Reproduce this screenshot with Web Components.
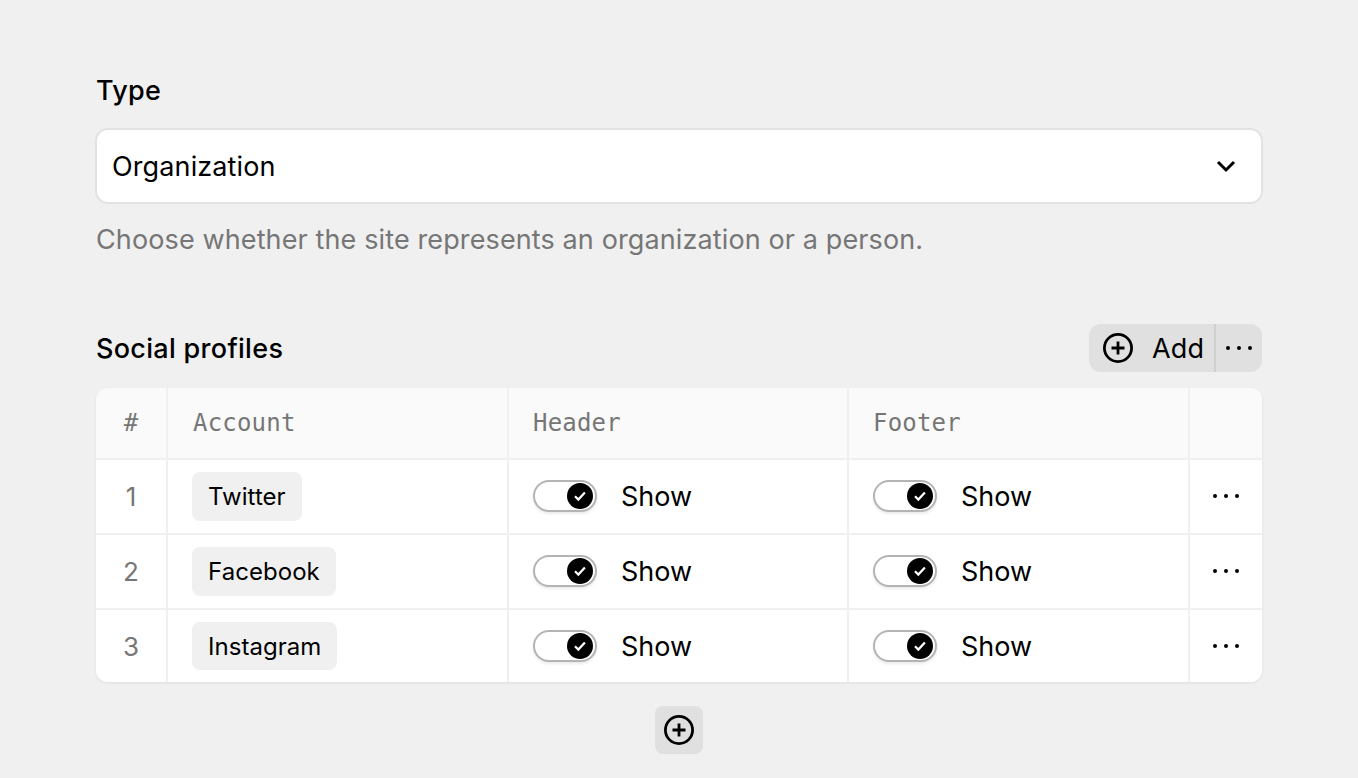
<!DOCTYPE html>
<html lang="en">
<head>
<meta charset="utf-8">
<title>Site settings</title>
<style>
  html, body { margin: 0; height: 100%; }
  body {
    background: #f0f0f0;
    color: #000;
    font-family: Inter, "Noto Sans", sans-serif;
    font-size: 27px;
    letter-spacing: 0.12px;
    overflow: hidden;
  }
  settings-page { height: 778px; }
</style>
</head>
<body>
<template id="plus-icon">
  <style>:host { display: inline-flex; width: 32px; height: 32px; } svg { display: block; }</style>
  <svg width="32" height="32" viewBox="0 0 32 32" fill="none" stroke="#000" stroke-width="2.8">
    <circle cx="16" cy="16" r="13.6"/>
    <path d="M16 9.5v13M9.5 16h13"/>
  </svg>
</template>

<template id="dots-icon">
  <style>:host { display: inline-flex; width: 28px; height: 6px; } svg { display: block; }</style>
  <svg width="28" height="6" viewBox="0 0 28 6" fill="#000">
    <circle cx="3" cy="3" r="2"/>
    <circle cx="14" cy="3" r="2"/>
    <circle cx="25" cy="3" r="2"/>
  </svg>
</template>

<settings-page>
  <field-label>Type</field-label>
  <select-box>Organization</select-box>
  <help-text>Choose whether the site represents an organization or a person.</help-text>
  <section-head>Social profiles</section-head>
  <profile-table>
    <profile-row num="1" account="Twitter"></profile-row>
    <profile-row num="2" account="Facebook"></profile-row>
    <profile-row num="3" account="Instagram"></profile-row>
  </profile-table>
  <add-row></add-row>
</settings-page>

<script>
  // small helper, every element below just sets its shadow html
  class Base extends HTMLElement {
    constructor() {
      super();
      this.attachShadow({ mode: "open" });
    }
    connectedCallback() {
      this.shadowRoot.innerHTML = this.render();
    }
  }

  class PlusIcon extends HTMLElement {
    constructor() {
      super();
      this.attachShadow({ mode: "open" });
      this.shadowRoot.append(document.getElementById("plus-icon").content.cloneNode(true));
    }
  }

  class DotsIcon extends HTMLElement {
    constructor() {
      super();
      this.attachShadow({ mode: "open" });
      this.shadowRoot.append(document.getElementById("dots-icon").content.cloneNode(true));
    }
  }

  class SettingsPage extends Base {
    render() {
      return `
        <style>
          :host { display: flex; flex-direction: column; padding: 73px 96px 0; box-sizing: border-box; }
        </style>
        <slot></slot>
      `;
    }
  }

  class FieldLabel extends Base {
    render() {
      return `
        <style>
          :host { display: block; height: 36px; line-height: 36px; font-weight: 500; letter-spacing: 0.3px; margin-bottom: 19px; }
        </style>
        <slot></slot>
      `;
    }
  }

  class SelectBox extends Base {
    render() {
      return `
        <style>
          :host {
            display: flex; align-items: center; justify-content: space-between;
            height: 76px; box-sizing: border-box;
            margin: 0 -1px 18px;
            padding: 0 25px 0 15px;
            background: #fff;
            border: 2px solid #e2e2e2;
            border-radius: 13px;
          }
          svg { display: block; }
        </style>
        <span><slot></slot></span>
        <svg width="20" height="14" viewBox="0 0 20 14" fill="none" stroke="#000" stroke-width="3">
          <path d="M2 3l8 8 8-8"/>
        </svg>
      `;
    }
  }

  class HelpText extends Base {
    render() {
      return `
        <style>
          :host { display: block; height: 36px; line-height: 36px; color: #767676; margin-bottom: 66px; }
        </style>
        <slot></slot>
      `;
    }
  }

  class SectionHead extends Base {
    render() {
      return `
        <style>
          :host { display: flex; align-items: center; justify-content: space-between; height: 48px; margin-bottom: 16px; }
          .title { font-weight: 500; letter-spacing: 0.3px; }
          .split { display: flex; height: 48px; background: #e0e0e0; border-radius: 12px; overflow: hidden; }
          .add { display: flex; align-items: center; gap: 18px; width: 127px; box-sizing: border-box; padding-left: 13px; border-right: 2px solid #cfcfcf; }
          .more { display: flex; align-items: center; justify-content: center; width: 46px; }
        </style>
        <span class="title"><slot></slot></span>
        <div class="split">
          <div class="add"><plus-icon></plus-icon><span>Add</span></div>
          <div class="more"><dots-icon></dots-icon></div>
        </div>
      `;
    }
  }

  class ProfileTable extends Base {
    render() {
      return `
        <style>
          :host {
            display: block;
            background: #fff;
            border-radius: 12px;
            overflow: hidden;
            box-shadow: 0 1px 3px rgba(0, 0, 0, 0.08);
          }
          .head {
            display: grid;
            grid-template-columns: 70px 339px 338px 339px 1fr;
            column-gap: 2px;
            height: 70px;
            background: #fafafa;
            border-bottom: 2px solid #f0f0f0;
            font-family: "DejaVu Sans Mono", "Liberation Mono", monospace;
            font-size: 24px;
            letter-spacing: 0.2px;
            color: #767676;
          }
          .head div { display: flex; align-items: center; position: relative; padding-left: 24px; }
          .head div:first-child { padding-left: 0; justify-content: center; }
          .head div:nth-child(2) { padding-left: 25px; }
          .head div:nth-child(n+2)::before {
            content: ""; position: absolute; left: -2px; top: 0; bottom: 0; width: 2px; background: #f0f0f0;
          }
        </style>
        <div class="head">
          <div>#</div><div>Account</div><div>Header</div><div>Footer</div><div></div>
        </div>
        <slot></slot>
      `;
    }
  }

  class ProfileRow extends Base {
    render() {
      const num = this.getAttribute("num");
      const account = this.getAttribute("account");
      return `
        <style>
          :host {
            display: grid;
            grid-template-columns: 70px 339px 338px 339px 1fr;
            column-gap: 2px;
            height: 73px;
            background: #f0f0f0;
            --nudge: 1px;
          }
          :host(:not(:last-child)) { border-bottom: 2px solid #f0f0f0; }
          :host(:last-child) { height: 72px; --nudge: 0px; }
          .cell { display: flex; align-items: center; background: #fff; }
          .num { justify-content: center; color: #767676; font-size: 26px; letter-spacing: 0; }
          .account { padding-left: 24px; }
          .tag { padding: 0 16px; height: 48.5px; line-height: 50px; background: #f0f0f0; border-radius: 8px; font-size: 24px; letter-spacing: 0.05px; }
          .show { padding-left: 24px; gap: 24px; }
          .show toggle-switch { margin-bottom: var(--nudge); }
          .show span { margin-bottom: var(--nudge); letter-spacing: 0; }
          .more { justify-content: center; }
          .more dots-icon { margin-bottom: var(--nudge); }
        </style>
        <div class="cell num">${num}</div>
        <div class="cell account"><span class="tag">${account}</span></div>
        <div class="cell show"><toggle-switch></toggle-switch><span>Show</span></div>
        <div class="cell show"><toggle-switch></toggle-switch><span>Show</span></div>
        <div class="cell more"><dots-icon></dots-icon></div>
      `;
    }
  }

  class ToggleSwitch extends Base {
    render() {
      return `
        <style>
          :host {
            display: flex; align-items: center; justify-content: flex-end;
            width: 64px; height: 32px; box-sizing: border-box;
            padding-right: 2px;
            background: #fff;
            border: 2px solid #b4b4b4;
            border-radius: 16px;
            box-shadow: 0 2px 3px rgba(0, 0, 0, 0.08);
          }
          svg { display: block; }
        </style>
        <svg width="26" height="26" viewBox="0 0 26 26">
          <circle cx="13" cy="13" r="13" fill="#000"/>
          <path d="M8 13.3l3.3 3.3 6.6-7.2" fill="none" stroke="#fff" stroke-width="2.2"/>
        </svg>
      `;
    }
  }

  class AddRow extends Base {
    render() {
      return `
        <style>
          :host { display: flex; justify-content: center; margin-top: 24px; }
          .btn { display: flex; align-items: center; justify-content: center; width: 48px; height: 48px; background: #e0e0e0; border-radius: 8px; }
        </style>
        <div class="btn"><plus-icon></plus-icon></div>
      `;
    }
  }

  customElements.define("plus-icon", PlusIcon);
  customElements.define("dots-icon", DotsIcon);
  customElements.define("settings-page", SettingsPage);
  customElements.define("field-label", FieldLabel);
  customElements.define("select-box", SelectBox);
  customElements.define("help-text", HelpText);
  customElements.define("section-head", SectionHead);
  customElements.define("profile-table", ProfileTable);
  customElements.define("profile-row", ProfileRow);
  customElements.define("toggle-switch", ToggleSwitch);
  customElements.define("add-row", AddRow);
</script>
</body>
</html>
